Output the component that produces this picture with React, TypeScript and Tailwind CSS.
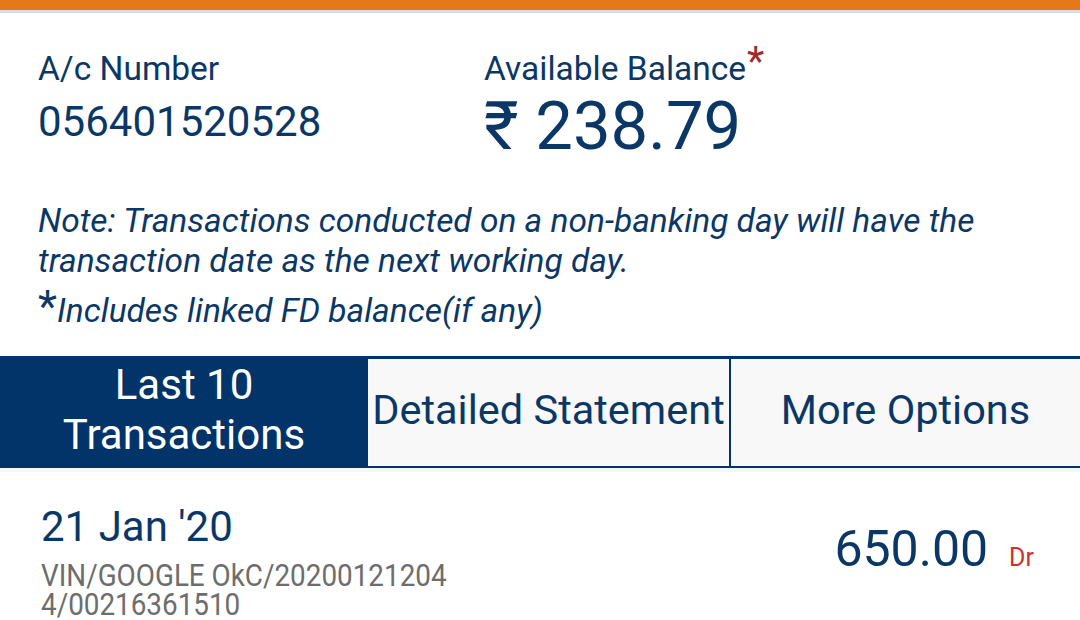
import React from "react";

const navy = "text-[#0b3767]";

const App = () => {
  return (
    <div className="w-[1080px] h-[620px] overflow-hidden bg-white font-['Roboto','Liberation_Sans',sans-serif]">
      <div className="h-[10px] bg-[#e5781a]" />
      <div className="h-[3px] bg-[#dcdcdc]" />

      <div className="flex px-[38px] pt-[37px]">
        <div className="w-[446px]">
          <div className={`h-[38px] text-[33.5px] leading-[38px] ${navy}`}>A/c Number</div>
          <div className={`mt-[10px] h-[48px] text-[42px] leading-[48px] ${navy}`}>056401520528</div>
        </div>
        <div>
          <div className={`h-[38px] text-[33.5px] leading-[38px] whitespace-nowrap ${navy}`}>
            Available Balance
            <span className="relative -top-[5px] ml-[1px] text-[40px] leading-[0] text-[#a12b2b]">*</span>
          </div>
          <div className={`mt-[3px] h-[70px] text-[67px] leading-[70px] whitespace-nowrap ${navy}`}>
            <span className="leading-none">₹</span> 238.79
          </div>
        </div>
      </div>

      <div className={`px-[38px] mt-[40px] text-[33.5px] leading-[40px] italic ${navy}`}>
        <p className="h-[80px]">
          Note: Transactions conducted on a non-banking day will have the
          <br />
          transaction date as the next working day.
        </p>
        <p className="mt-[10px] h-[40px] whitespace-nowrap">
          <span className="not-italic text-[44px] leading-[0]">*</span>Includes linked FD balance(if any)
        </p>
      </div>

      <div className="mt-[25px] flex border-t-[3px] border-b-2 border-[#02346a] h-[112px]">
        <div className="w-[368px] bg-[#02346a] flex items-center justify-center pb-[6px] text-center text-white text-[42px] leading-[50px]">
          <span>
            Last 10
            <br />
            Transactions
          </span>
        </div>
        <div className={`w-[361px] bg-[#f8f8f8] flex items-center justify-center pb-[6px] text-[41.5px] leading-[50px] whitespace-nowrap ${navy}`}>
          Detailed Statement
        </div>
        <div className="w-[2px] bg-[#02346a]" />
        <div className={`flex-1 bg-[#f8f8f8] flex items-center justify-center pb-[6px] text-[41.5px] leading-[50px] ${navy}`}>
          More Options
        </div>
      </div>
      <div className="h-[4px] bg-[#f5f6f8]" />

      <div className="flex justify-between pl-[41px] pr-[46px] pt-[31px]">
        <div>
          <div className={`text-[42px] leading-[48px] ${navy}`}>21 Jan '20</div>
          <div className="mt-[10px] text-[32px] leading-[29px] text-[#6d6d6d] scale-x-[0.87] origin-left whitespace-nowrap">
            VIN/GOOGLE OkC/20200121204
            <br />
            4/00216361510
          </div>
        </div>
        <div className="mt-[18px] flex items-baseline gap-[21px] h-fit">
          <span className={`text-[50px] leading-[56px] ${navy}`}>650.00</span>
          <span className="text-[25px] text-[#d0302c]">Dr</span>
        </div>
      </div>
    </div>
  );
};

export default App;
